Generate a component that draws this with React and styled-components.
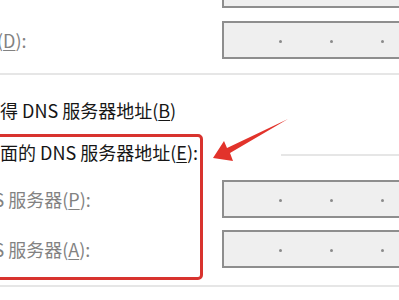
import React from "react";
import styled, { createGlobalStyle } from "styled-components";

const GlobalStyle = createGlobalStyle`
  html, body {
    margin: 0;
    padding: 0;
    width: 399px;
    height: 300px;
    overflow: hidden;
    background: #ffffff;
  }
  body {
    font-family: "Noto Sans CJK SC", "Noto Sans", sans-serif;
  }
`;

const Root = styled.div`
  position: relative;
  width: 399px;
  height: 300px;
  overflow: hidden;
`;

const Frame = styled.div`
  width: 660px;
  margin-left: -80px;
  margin-top: -30px;
  display: flex;
  flex-direction: column;
`;

const FieldRow = styled.div`
  display: grid;
  grid-template-columns: 302px 240px;
  align-items: center;
  height: 38px;
  margin-top: ${(p) => p.gap || 0}px;
`;

const Label = styled.div`
  padding-left: ${(p) => p.indent ?? 5}px;
  font-size: 18px;
  line-height: 24px;
  color: ${(p) => (p.disabled ? "#828282" : "#161616")};
  white-space: nowrap;
  u {
    text-decoration: underline;
    text-underline-offset: 2px;
  }
`;

const IpBox = styled.div`
  box-sizing: border-box;
  height: 38px;
  display: flex;
  align-items: flex-end;
  padding: 0 0 14px 7px;
  background: #efefef;
  border: 2px solid #8e8e8e;
`;

const Octet = styled.span`
  width: 48px;
`;

const Dot = styled.span`
  width: 3px;
  height: 3px;
  border-radius: 50%;
  background: #8a8a8a;
`;

const Divider = styled.div`
  height: 2px;
  background: #e6e6e6;
  margin-top: ${(p) => p.gap || 0}px;
`;

const RadioRow = styled.div`
  display: flex;
  align-items: center;
  height: 24px;
  padding-left: 4px;
  gap: 6px;
  margin-top: ${(p) => p.gap || 0}px;
`;

const Radio = styled.span`
  box-sizing: border-box;
  width: 16px;
  height: 16px;
  flex: none;
  border-radius: 50%;
  border: 1px solid #333;
  display: flex;
  align-items: center;
  justify-content: center;
  &::after {
    content: "";
    width: 8px;
    height: 8px;
    border-radius: 50%;
    background: ${(p) => (p.checked ? "#1e1e1e" : "transparent")};
  }
`;

const RadioLabel = styled(Label)`
  padding-left: 0;
`;

const GroupLine = styled.div`
  flex: 1;
  height: 2px;
  margin-left: 77px;
  margin-top: 6px;
  background: #e6e6e6;
`;

const RedBox = styled.div`
  position: absolute;
  left: -10px;
  top: 134px;
  width: 213px;
  height: 146px;
  box-sizing: border-box;
  border: 3px solid #d8332e;
  border-radius: 5px;
`;

const Arrow = styled.svg`
  position: absolute;
  left: 205px;
  top: 112px;
`;

function IpField() {
  return (
    <IpBox>
      <Octet />
      <Dot />
      <Octet />
      <Dot />
      <Octet />
      <Dot />
      <Octet />
    </IpBox>
  );
}

export default function App() {
  return (
    <Root>
      <GlobalStyle />
      <Frame>
        <FieldRow>
          <Label disabled />
          <IpField />
        </FieldRow>
        <FieldRow gap={13}>
          <Label disabled>默认网关(<u>D</u>):</Label>
          <IpField />
        </FieldRow>
        <Divider gap={14} />
        <RadioRow gap={23}>
          <Radio />
          <RadioLabel>自动获得 DNS 服务器地址(<u>B</u>)</RadioLabel>
        </RadioRow>
        <RadioRow gap={18}>
          <Radio checked />
          <RadioLabel>使用下面的 DNS 服务器地址(<u>E</u>):</RadioLabel>
          <GroupLine />
        </RadioRow>
        <FieldRow gap={16}>
          <Label disabled indent={8}>首选 DNS 服务器(<u>P</u>):</Label>
          <IpField />
        </FieldRow>
        <FieldRow gap={12}>
          <Label disabled indent={8}>备用 DNS 服务器(<u>A</u>):</Label>
          <IpField />
        </FieldRow>
        <Divider gap={17} />
      </Frame>
      <RedBox />
      <Arrow width="90" height="55" viewBox="0 0 90 55">
        <polygon points="8,46 19,29 22,36 83,7 25,41 28,49" fill="#e2332b" />
      </Arrow>
    </Root>
  );
}
